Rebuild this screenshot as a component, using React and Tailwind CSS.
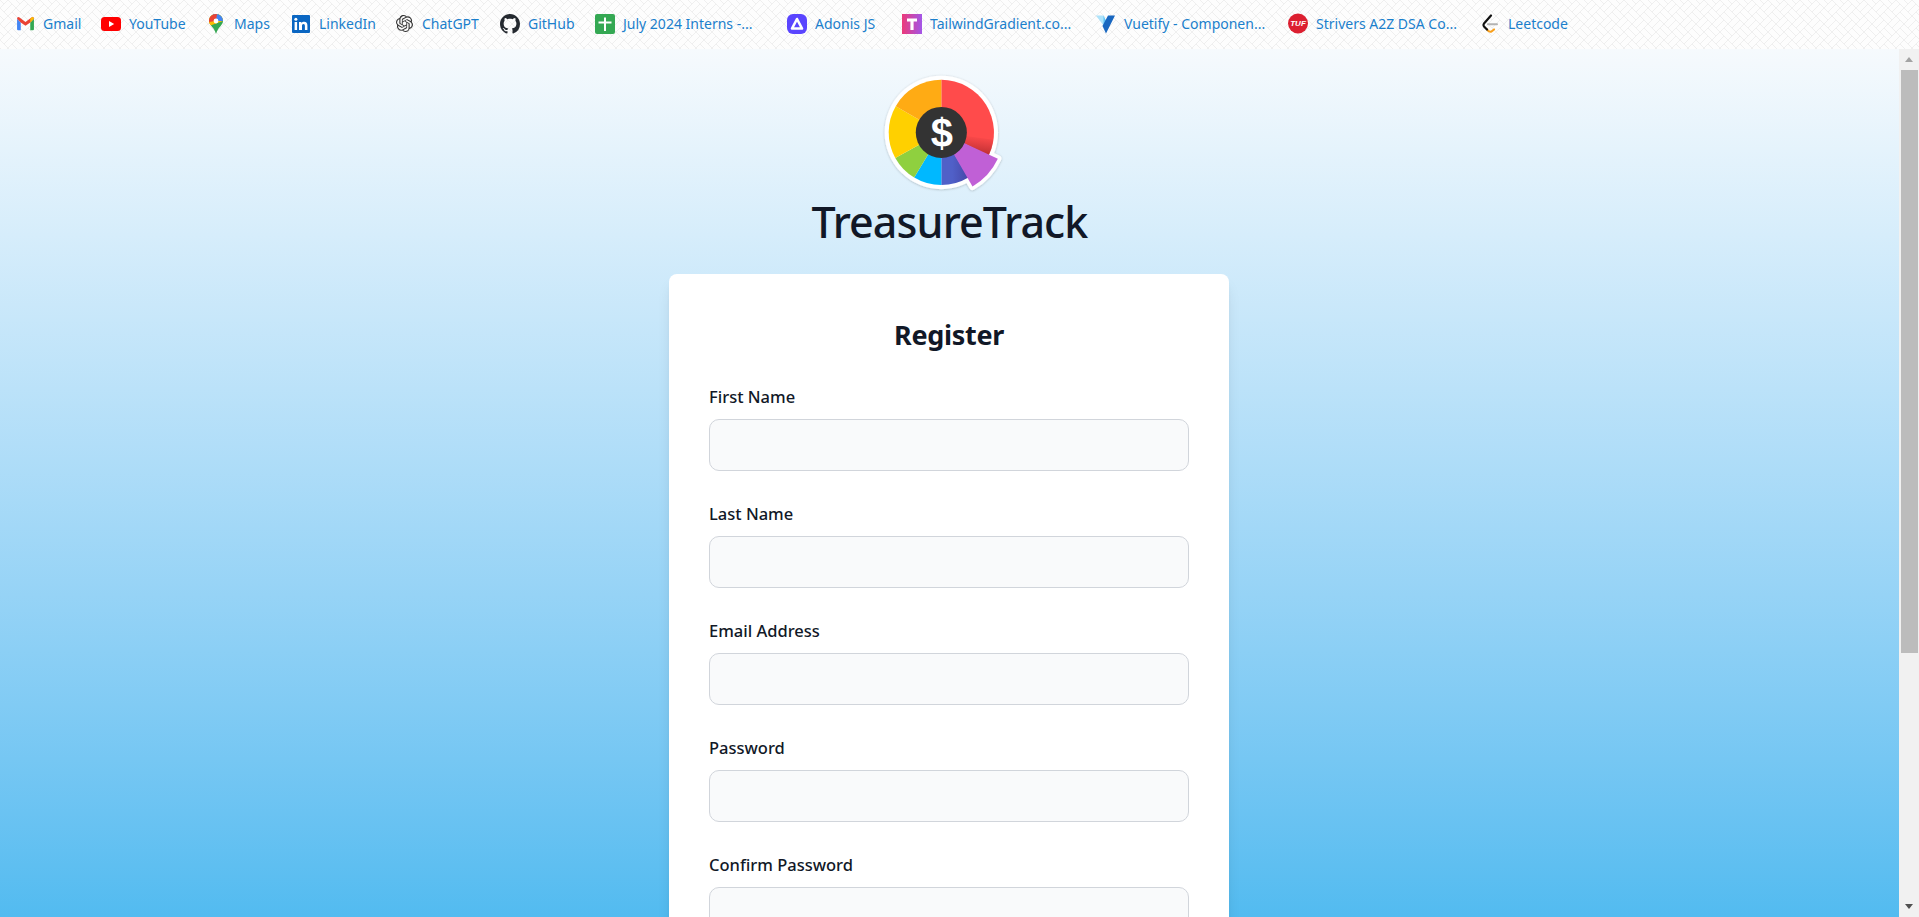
import { Fragment } from "react";
import { SiOpenai } from "react-icons/si";

// polar helpers for the logo, angles clockwise from 12 o'clock
const pt = (r, deg) => {
  const a = ((deg - 90) * Math.PI) / 180;
  return `${(r * Math.cos(a)).toFixed(2)} ${(r * Math.sin(a)).toFixed(2)}`;
};
const wedge = (r, from, to) =>
  `M0 0L${pt(r, from)}A${r} ${r} 0 ${to - from > 180 ? 1 : 0} 1 ${pt(r, to)}Z`;

const slices = [
  { from: 0, to: 116, fill: "#ff4b4b" },
  { from: 149, to: 180, fill: "url(#indigoShade)" },
  { from: 180, to: 211, fill: "#00b8ff" },
  { from: 211, to: 241, fill: "#8fd03f" },
  { from: 241, to: 300, fill: "#ffd000" },
  { from: 300, to: 360, fill: "#ffab14" },
];

const Logo = () => (
  <svg viewBox="-60 -60 136 124" className="w-[139px] h-[127px] shrink-0">
    <defs>
      <linearGradient id="indigoShade" x1="0" y1="0" x2="1" y2="0">
        <stop offset="0.4" stopColor="#5060c8" />
        <stop offset="1" stopColor="#4648a8" />
      </linearGradient>
      <linearGradient id="redDark" x1="0.6" y1="0.1" x2="0.35" y2="1">
        <stop offset="0" stopColor="#b52b30" stopOpacity="0" />
        <stop offset="1" stopColor="#a8262b" stopOpacity="0.95" />
      </linearGradient>
      <filter id="soft" x="-10%" y="-10%" width="120%" height="120%">
        <feDropShadow dx="0" dy="0.5" stdDeviation="0.8" floodColor="#000" floodOpacity="0.25" />
      </filter>
    </defs>
    <g filter="url(#soft)">
      <circle r="55.5" fill="#fff" />
      <path d={wedge(61, 115, 150)} fill="#fff" stroke="#fff" strokeWidth="7" strokeLinejoin="round" />
    </g>
    {slices.map((s) => (
      <path key={s.from} d={wedge(51.5, s.from, s.to)} fill={s.fill} />
    ))}
    <path d={wedge(51.5, 98, 116)} fill="url(#redDark)" />
    <path d={wedge(61, 115, 150)} fill="#c060d6" />
    <circle r="25" fill="#333" />
    <text x="0.5" y="14" textAnchor="middle" fill="#fff" className="font-['Liberation_Sans',sans-serif] font-bold text-[39px]">$</text>
  </svg>
);

const icons = {
  gmail: (
    <svg viewBox="0 0 18 18" className="w-[19px] h-[19px]">
      <path d="M1 4.5v10q0 1 1 1h2.5V8Z" fill="#4285f4" />
      <path d="M17 4.5v10q0 1-1 1h-2.5V8Z" fill="#34a853" />
      <path d="M1 4.5Q1 2.2 3.4 3.2L9 7.5 14.6 3.2Q17 2.2 17 4.5L13.5 8 9 11.2 4.5 8Z" fill="#ea4335" />
      <path d="M13.5 4.6l1.1-1.4Q17 2.2 17 4.5L13.5 8Z" fill="#fbbc04" />
    </svg>
  ),
  youtube: (
    <svg viewBox="0 0 20 20" className="w-5 h-5">
      <rect x="0" y="3" width="20" height="14" rx="3.5" fill="#ff0000" />
      <path d="M8 7l5.2 3L8 13Z" fill="#fff" />
    </svg>
  ),
  maps: (
    <svg viewBox="0 0 14 20" className="w-[14px] h-5">
      <clipPath id="pin">
        <path d="M7 0C3 0 0 3 0 7c0 4 5 6 7 13 2-7 7-9 7-13 0-4-3-7-7-7Z" />
      </clipPath>
      <g clipPath="url(#pin)">
        <rect width="14" height="20" fill="#34a853" />
        <path d="M0 0H14V7L0 12Z" fill="#fbbc04" />
        <path d="M3 0H14V7L7 7Z" fill="#4285f4" />
        <path d="M0 0H8L7 7 0 9Z" fill="#ea4335" />
        <path d="M0 8L7 7 0 13Z" fill="#fbbc04" />
      </g>
      <circle cx="7" cy="7" r="2.4" fill="#fff" />
    </svg>
  ),
  linkedin: (
    <svg viewBox="0 0 18 18" className="w-[18px] h-[18px]">
      <rect width="18" height="18" rx="1" fill="#0a66c2" />
      <rect x="2.6" y="7" width="2.5" height="8" fill="#fff" />
      <circle cx="3.85" cy="4.3" r="1.5" fill="#fff" />
      <path d="M7 7h2.4v1.2C10 7.2 11 6.8 12.2 6.8c2.2 0 3.2 1.3 3.2 3.7V15h-2.5v-4c0-1.2-.4-2-1.4-2-1.1 0-1.5.8-1.5 2v4H7Z" fill="#fff" />
    </svg>
  ),
  chatgpt: <SiOpenai className="w-[17px] h-[17px] text-[#333]" />,
  github: (
    <svg viewBox="0 0 16 16" className="w-5 h-5" fill="#24292f">
      <path d="M8 0C3.58 0 0 3.58 0 8c0 3.54 2.29 6.53 5.47 7.59.4.07.55-.17.55-.38 0-.19-.01-.82-.01-1.49-2.01.37-2.53-.49-2.69-.94-.09-.23-.48-.94-.82-1.13-.28-.15-.68-.52-.01-.53.63-.01 1.08.58 1.23.82.72 1.21 1.87.87 2.33.66.07-.52.28-.87.51-1.07-1.78-.2-3.64-.89-3.64-3.95 0-.87.31-1.59.82-2.15-.08-.2-.36-1.02.08-2.12 0 0 .67-.21 2.2.82.64-.18 1.32-.27 2-.27s1.36.09 2 .27c1.53-1.04 2.2-.82 2.2-.82.44 1.1.16 1.92.08 2.12.51.56.82 1.27.82 2.15 0 3.07-1.87 3.75-3.65 3.95.29.25.54.73.54 1.48 0 1.07-.01 1.93-.01 2.2 0 .21.15.46.55.38A8.01 8.01 0 0 0 16 8c0-4.42-3.58-8-8-8Z" />
    </svg>
  ),
  sheets: (
    <svg viewBox="0 0 20 20" className="w-5 h-5">
      <rect width="20" height="20" rx="2" fill="#34a853" />
      <path d="M9 3.5h2v4h5.5v2H11V17H9V9.5H3.5v-2H9Z" fill="#fff" />
    </svg>
  ),
  adonis: (
    <svg viewBox="0 0 20 20" className="w-5 h-5">
      <rect width="20" height="20" rx="6" fill="#5a45ff" />
      <path d="M10 5L15 14.5H5Z" fill="none" stroke="#fff" strokeWidth="2.6" strokeLinejoin="round" />
    </svg>
  ),
  tailwind: (
    <svg viewBox="0 0 20 20" className="w-5 h-5">
      <defs>
        <linearGradient id="twGrad" x1="0" y1="0" x2="1" y2="0">
          <stop offset="0" stopColor="#ec3a79" />
          <stop offset="1" stopColor="#a356e8" />
        </linearGradient>
      </defs>
      <rect width="20" height="20" fill="url(#twGrad)" />
      <path d="M5 4.5h10v3h-3.4V16H8.4V7.5H5Z" fill="#fff" />
    </svg>
  ),
  vuetify: (
    <svg viewBox="0 0 20 20" className="w-5 h-5">
      <path d="M0 1.5h7.5L10 7l-2.5 4.5Z" fill="#aee3fb" />
      <path d="M7.5 1.5L11 9 7.5 13Z" fill="#5fc4f6" />
      <path d="M19 1.5h-7L6.5 12 10 19.5Z" fill="#1867c0" />
    </svg>
  ),
  tuf: (
    <svg viewBox="0 0 20 20" className="w-[21px] h-[21px]">
      <circle cx="10" cy="10" r="10" fill="#dc1f30" />
      <text x="10" y="12.8" textAnchor="middle" fill="#fff" className="font-['Liberation_Sans',sans-serif] font-bold italic text-[8px]">TUF</text>
    </svg>
  ),
  leetcode: (
    <svg viewBox="0 0 16 20" className="w-4 h-5" fill="none" strokeLinecap="round" strokeLinejoin="round">
      <path d="M5 15.5Q7 18.5 9.5 17.5L12 15.5" stroke="#f89f1b" strokeWidth="2.2" />
      <path d="M9 1.5L2 9.5Q1 11 2 12.5L5 15.5" stroke="#111" strokeWidth="2.2" />
      <path d="M6 10.3h9" stroke="#b3b3b3" strokeWidth="2" />
    </svg>
  ),
};

const bookmarks = [
  { icon: "gmail", label: "Gmail", width: "w-[86px]" },
  { icon: "youtube", label: "YouTube", width: "w-[105px]" },
  { icon: "maps", label: "Maps", width: "w-[85px]" },
  { icon: "linkedin", label: "LinkedIn", width: "w-[103px]" },
  { icon: "chatgpt", label: "ChatGPT", width: "w-[106px]" },
  { icon: "github", label: "GitHub", width: "w-[95px]" },
  { icon: "sheets", label: "July 2024 Interns -...", width: "w-[192px]" },
  { icon: "adonis", label: "Adonis JS", width: "w-[115px]" },
  { icon: "tailwind", label: "TailwindGradient.co...", width: "w-[194px]" },
  { icon: "vuetify", label: "Vuetify - Componen...", width: "w-[192px]" },
  { icon: "tuf", label: "Strivers A2Z DSA Co...", width: "w-[192px]" },
  { icon: "leetcode", label: "Leetcode", width: "w-[100px]" },
];

const fields = ["First Name", "Last Name", "Email Address", "Password", "Confirm Password"];

const BookmarkBar = () => (
  <div className="h-[49px] shrink-0 flex items-center pl-[15px] pb-[2px] bg-[#fdfdfd] bg-[url('data:image/svg+xml,%3Csvg%20xmlns=%22http://www.w3.org/2000/svg%22%20width=%2216%22%20height=%2216%22%3E%3Cpath%20d=%22M0%208L8%200M8%2016L16%208M8%200L16%208M0%208L8%2016M4%2012L12%204M-4%20-4L4%204M12%20-4L20%204M-4%2012L4%2020M12%2012L20%2020%22%20stroke=%22%23efefef%22%20fill=%22none%22/%3E%3C/svg%3E')]">
    {bookmarks.map((b) => (
      <div key={b.label} className={`${b.width} shrink-0 flex items-center gap-[8px]`}>
        <span className="w-5 shrink-0 flex justify-center">{icons[b.icon]}</span>
        <span className="text-[14px] text-[#1b7fcc] whitespace-nowrap">{b.label}</span>
      </div>
    ))}
  </div>
);

const Scrollbar = () => (
  <div className="w-[20px] shrink-0 bg-[#f1f1f1] flex flex-col items-center">
    <div className="h-[21px] w-full shrink-0 flex items-center justify-center">
      <div className="w-0 h-0 border-x-[4.5px] border-x-transparent border-b-[5px] border-b-[#a3a3a3]" />
    </div>
    <div className="h-[583px] w-[17px] shrink-0 ml-[1px] bg-[#bcbcbc]" />
    <div className="flex-1" />
    <div className="h-[21px] w-full shrink-0 flex items-center justify-center">
      <div className="w-0 h-0 border-x-[4.5px] border-x-transparent border-t-[5px] border-t-[#505050]" />
    </div>
  </div>
);

export default function App() {
  return (
    <div className="h-screen overflow-hidden flex flex-col font-['Noto_Sans','Open_Sans',sans-serif]">
      <BookmarkBar />
      <div className="flex-1 min-h-0 flex">
        <main className="flex-1 min-w-0 overflow-hidden bg-gradient-to-b from-[#f6fafd] to-[#52bbf0] flex flex-col items-center pt-[22px]">
          <Logo />
          <h1 className="shrink-0 text-[43px] leading-[56px] font-medium tracking-[-0.9px] text-[#111827] -mt-[4px]">TreasureTrack</h1>
          <div className="w-[560px] shrink-0 mt-[24px] mr-[1px] bg-white rounded-lg shadow-lg p-10">
            <h2 className="text-[27px] leading-[42px] font-bold tracking-[-0.3px] text-[#111827] text-center mb-[28px]">Register</h2>
            {fields.map((f) => (
              <Fragment key={f}>
                <label className="block text-[16.5px] leading-[26px] font-medium text-[#111827] mb-[9px]">{f}</label>
                <div className="h-[52px] rounded-[10px] border border-[#d1d5db] bg-[#f9fafb] mb-[30px]" />
              </Fragment>
            ))}
          </div>
        </main>
        <Scrollbar />
      </div>
    </div>
  );
}
